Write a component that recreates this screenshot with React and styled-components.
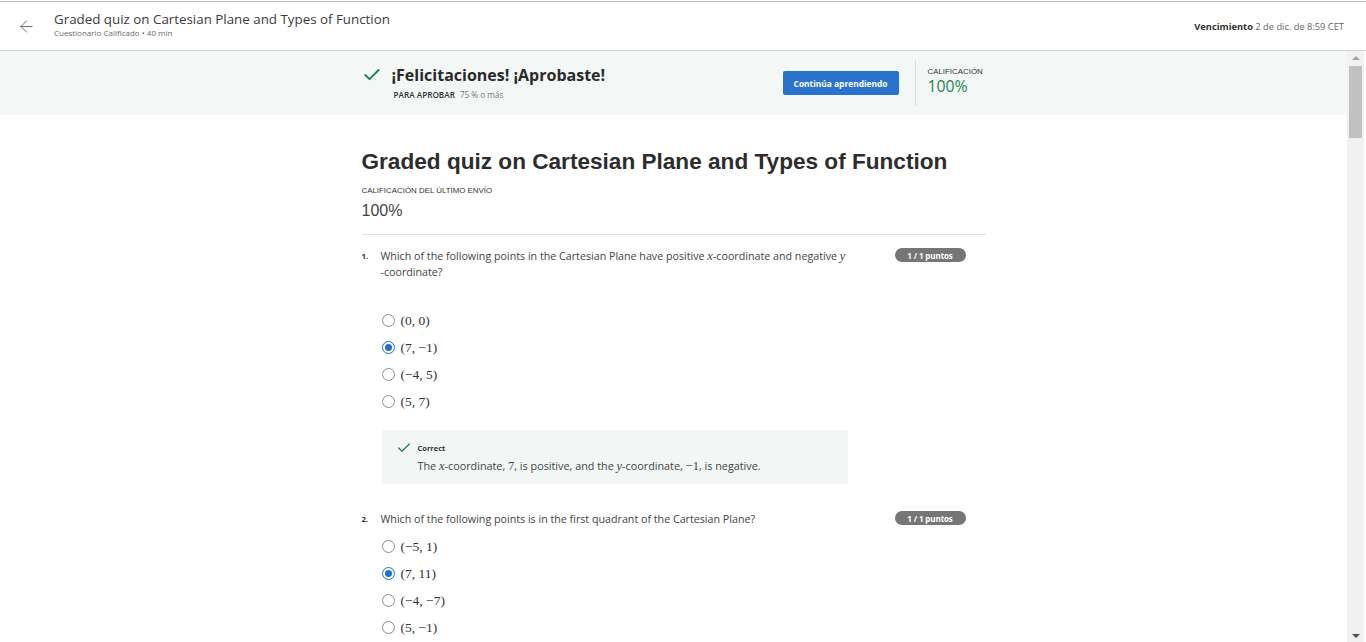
import React from "react";
import styled, { createGlobalStyle } from "styled-components";
import { ArrowLeft, Check } from "lucide-react";

const GlobalStyle = createGlobalStyle`
  html, body, #root {
    margin: 0;
    padding: 0;
    height: 100%;
  }
  body {
    font-family: "Open Sans", "Noto Sans", sans-serif;
    color: #333;
    overflow: hidden;
    background: #fff;
  }
  * { box-sizing: border-box; }
`;

const Page = styled.div`
  display: flex;
  flex-direction: column;
  height: 100vh;
  padding-top: 1px;
`;

const TopBar = styled.header`
  flex: 0 0 auto;
  height: 50px;
  display: flex;
  align-items: center;
  padding: 0 22px 0 17px;
  border-top: 1px solid #bdbdbd;
  border-bottom: 1px solid #d3d3d3;
  background: #fff;
`;

const BackButton = styled.button`
  border: 0;
  background: none;
  padding: 0;
  margin-right: 18px;
  display: flex;
  color: #555;
  cursor: pointer;
`;

const TitleBlock = styled.div`
  display: flex;
  flex-direction: column;
  margin-top: -3px;
`;

const TopTitle = styled.div`
  font-size: 13.35px;
  line-height: 17px;
  color: #3c3c3c;
`;

const TopSub = styled.div`
  font-size: 8px;
  line-height: 10px;
  color: #6b6b6b;
`;

const Due = styled.div`
  margin-left: auto;
  font-size: 9.3px;
  color: #666;
  b { color: #333; font-weight: 700; }
`;

const Body = styled.div`
  flex: 1 1 auto;
  min-height: 0;
  display: flex;
`;

const Content = styled.main`
  flex: 1 1 auto;
  overflow: hidden;
  background: #fff;
`;

const Rail = styled.div`
  flex: 0 0 17px;
  margin-right: 2px;
  background: #f1f1f1;
  display: flex;
  flex-direction: column;
`;

const RailButton = styled.div`
  height: 15px;
  display: flex;
  align-items: center;
  justify-content: center;
  &::before {
    content: "";
    width: 0;
    height: 0;
    border-left: 4px solid transparent;
    border-right: 4px solid transparent;
    ${(p) =>
      p.$down
        ? "border-top: 4px solid #505050; margin-top: 2px;"
        : "border-bottom: 4px solid #a3a3a3; margin-top: -1px;"}
  }
`;

const Thumb = styled.div`
  height: 72px;
  margin: 0 2px;
  background: #c1c1c1;
`;

const RailTrack = styled.div`
  flex: 1 1 auto;
`;

const Banner = styled.section`
  background: #f3f8f6;
  height: 64px;
`;

const Column = styled.div`
  width: 624px;
  margin: 0 auto;
`;

const BannerInner = styled(Column)`
  height: 100%;
  display: flex;
  align-items: center;
`;

const PassBlock = styled.div`
  display: flex;
  align-items: flex-start;
  gap: 10px;
  margin-top: -2px;
`;

const PassText = styled.div`
  display: flex;
  flex-direction: column;
`;

const PassTitle = styled.div`
  font-size: 16px;
  font-weight: 700;
  line-height: 20px;
  color: #2a2a2a;
`;

const PassMeta = styled.div`
  margin-top: 4px;
  padding-left: 2px;
  font-size: 8.2px;
  color: #777;
  b { color: #333; font-weight: 600; margin-right: 5px; }
`;

const PrimaryButton = styled.button`
  margin-left: auto;
  width: 116px;
  height: 24px;
  border: 0;
  border-radius: 2px;
  background: #2a73cc;
  color: #fff;
  font-family: inherit;
  font-size: 8.4px;
  font-weight: 700;
  cursor: pointer;
`;

const VDivider = styled.div`
  width: 1px;
  height: 46px;
  background: #dcdcdc;
  margin: 0 12px 0 16px;
`;

const GradeBlock = styled.div`
  width: 58px;
  display: flex;
  flex-direction: column;
  margin-top: -4px;
`;

const SmallCaps = styled.div`
  font-family: "Liberation Sans", Arial, sans-serif;
  font-size: 7.9px;
  color: #333;
  line-height: 10px;
`;

const GradeValue = styled.div`
  font-size: 15.8px;
  line-height: 19px;
  color: #1f8354;
`;

const Heading = styled.h1`
  margin: 33px 0 0;
  font-family: "Liberation Sans", Arial, sans-serif;
  font-size: 22.6px;
  font-weight: 700;
  line-height: 28px;
  color: #2d2d2d;
`;

const ScoreBlock = styled.div`
  margin-top: 10px;
  padding-bottom: 12px;
  border-bottom: 1px solid #e1e1e1;
`;

const ScoreValue = styled.div`
  margin-top: 4px;
  font-family: "Liberation Sans", Arial, sans-serif;
  font-size: 16px;
  line-height: 22px;
  color: #444;
`;

const Question = styled.div`
  margin-top: ${(p) => p.$top}px;
`;

const QRow = styled.div`
  display: flex;
  align-items: flex-start;
`;

const QNum = styled.div`
  width: 19px;
  font-size: 7.8px;
  font-weight: 700;
  line-height: 16px;
  color: #333;
`;

const QText = styled.div`
  width: 480px;
  font-size: 10.7px;
  line-height: 16px;
  color: #444;
`;

const Badge = styled.span`
  margin: 0 20px 0 auto;
  width: 71px;
  height: 14px;
  border-radius: 7px;
  background: #767676;
  color: #fff;
  font-size: 8px;
  font-weight: 700;
  letter-spacing: -0.1px;
  display: flex;
  align-items: center;
  justify-content: center;
`;

const Options = styled.div`
  margin: ${(p) => p.$top}px 0 0 20px;
  display: flex;
  flex-direction: column;
`;

const Option = styled.label`
  height: 27px;
  display: flex;
  align-items: center;
  gap: 6px;
`;

const Radio = styled.span`
  width: 13px;
  height: 13px;
  border-radius: 50%;
  border: ${(p) => (p.$on ? "1.5px solid #1f6fd1" : "1px solid #8d8d8d")};
  display: flex;
  align-items: center;
  justify-content: center;
  &::after {
    content: "";
    display: ${(p) => (p.$on ? "block" : "none")};
    width: 7px;
    height: 7px;
    border-radius: 50%;
    background: #1f6fd1;
  }
`;

const MathText = styled.span`
  font-family: "Liberation Serif", "DejaVu Serif", serif;
  font-size: 13.5px;
  color: #333;
`;

const Var = styled.i`
  font-family: "Liberation Serif", "DejaVu Serif", serif;
  font-style: italic;
  font-size: 12.5px;
`;

const Num = styled.span`
  font-family: "Liberation Serif", "DejaVu Serif", serif;
  font-size: 12.5px;
`;

const Feedback = styled.div`
  margin: 15px 0 0 20px;
  width: 466px;
  height: 54px;
  background: #f2f7f5;
  display: flex;
  align-items: flex-start;
  gap: 6px;
  padding: 10px 0 0 14px;
`;

const FeedbackText = styled.div`
  display: flex;
  flex-direction: column;
`;

const FeedbackTitle = styled.div`
  font-size: 7.5px;
  font-weight: 700;
  line-height: 16px;
  color: #333;
`;

const FeedbackBody = styled.div`
  font-size: 10.8px;
  line-height: 19px;
  color: #444;
`;

const q1 = ["(0, 0)", "(7, −1)", "(−4, 5)", "(5, 7)"];
const q2 = ["(−5, 1)", "(7, 11)", "(−4, −7)", "(5, −1)"];

function OptionList({ items, selected, top }) {
  return (
    <Options $top={top}>
      {items.map((t, i) => (
        <Option key={t}>
          <Radio $on={i === selected} />
          <MathText>{t}</MathText>
        </Option>
      ))}
    </Options>
  );
}

export default function App() {
  return (
    <Page>
      <GlobalStyle />
      <TopBar>
        <BackButton aria-label="Volver">
          <ArrowLeft size={19} strokeWidth={1.1} />
        </BackButton>
        <TitleBlock>
          <TopTitle>Graded quiz on Cartesian Plane and Types of Function</TopTitle>
          <TopSub>Cuestionario Calificado • 40 min</TopSub>
        </TitleBlock>
        <Due>
          <b>Vencimiento</b> 2 de dic. de 8:59 CET
        </Due>
      </TopBar>
      <Body>
        <Content>
          <Banner>
            <BannerInner>
              <PassBlock>
                <Check size={20} strokeWidth={2.3} color="#1f8354" />
                <PassText>
                  <PassTitle>¡Felicitaciones! ¡Aprobaste!</PassTitle>
                  <PassMeta>
                    <b>PARA APROBAR</b>75 % o más
                  </PassMeta>
                </PassText>
              </PassBlock>
              <PrimaryButton>Continúa aprendiendo</PrimaryButton>
              <VDivider />
              <GradeBlock>
                <SmallCaps>CALIFICACIÓN</SmallCaps>
                <GradeValue>100%</GradeValue>
              </GradeBlock>
            </BannerInner>
          </Banner>
          <Column>
            <Heading>Graded quiz on Cartesian Plane and Types of Function</Heading>
            <ScoreBlock>
              <SmallCaps>CALIFICACIÓN DEL ÚLTIMO ENVÍO</SmallCaps>
              <ScoreValue>100%</ScoreValue>
            </ScoreBlock>

            <Question $top={13}>
              <QRow>
                <QNum>1.</QNum>
                <QText>
                  Which of the following points in the Cartesian Plane have positive <Var>x</Var>-coordinate and
                  negative <Var>y</Var>
                  <br />
                  -coordinate?
                </QText>
                <Badge>1 / 1 puntos</Badge>
              </QRow>
              <OptionList items={q1} selected={1} top={27} />
              <Feedback>
                <Check size={16} strokeWidth={2} color="#1f8354" />
                <FeedbackText>
                  <FeedbackTitle>Correct</FeedbackTitle>
                  <FeedbackBody>
                    The <Var>x</Var>-coordinate, <Num>7</Num>, is positive, and the <Var>y</Var>-coordinate,{" "}
                    <Num>−1</Num>, is negative.
                  </FeedbackBody>
                </FeedbackText>
              </Feedback>
            </Question>

            <Question $top={27}>
              <QRow>
                <QNum>2.</QNum>
                <QText>Which of the following points is in the first quadrant of the Cartesian Plane?</QText>
                <Badge>1 / 1 puntos</Badge>
              </QRow>
              <OptionList items={q2} selected={1} top={6} />
            </Question>
          </Column>
        </Content>
        <Rail aria-hidden="true">
          <RailButton />
          <Thumb />
          <RailTrack />
          <RailButton $down />
        </Rail>
      </Body>
    </Page>
  );
}
